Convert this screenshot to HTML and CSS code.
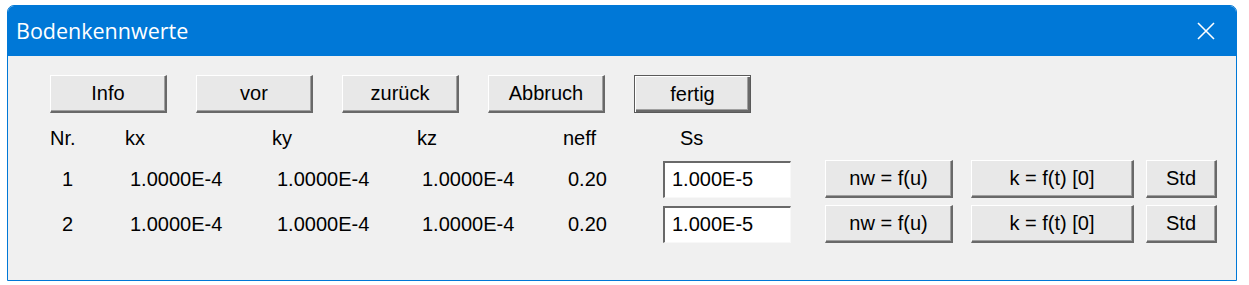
FILE: index.html
```html
<!DOCTYPE html>
<html lang="de">
<head>
<meta charset="utf-8">
<title>Bodenkennwerte</title>
<link rel="stylesheet" href="styles.css">
</head>
<body>
<div class="window">
  <div class="titlebar">
    <span class="title">Bodenkennwerte</span>
    <svg class="close" width="18" height="18" viewBox="0 0 18 18"><path d="M1 1 L17 17 M17 1 L1 17" stroke="#fff" stroke-width="1.6" fill="none"/></svg>
  </div>
  <div class="client">
    <div class="toolbar">
      <button class="btn tb">Info</button>
      <button class="btn tb">vor</button>
      <button class="btn tb">zurück</button>
      <button class="btn tb">Abbruch</button>
      <button class="btn tb default">fertig</button>
    </div>
    <div class="grid">
      <div class="hd c-nr">Nr.</div>
      <div class="hd c-kx">kx</div>
      <div class="hd c-ky">ky</div>
      <div class="hd c-kz">kz</div>
      <div class="hd c-ne">neff</div>
      <div class="hd c-ss">Ss</div>
      <div class="hd"></div>
      <div class="hd"></div>
      <div class="hd"></div>

      <div class="cell d-nr">1</div>
      <div class="cell d-k">1.0000E-4</div>
      <div class="cell d-k">1.0000E-4</div>
      <div class="cell d-k">1.0000E-4</div>
      <div class="cell d-k">0.20</div>
      <div class="cell"><div class="input">1.000E-5</div></div>
      <div class="cell"><button class="btn b1">nw = f(u)</button></div>
      <div class="cell"><button class="btn b2">k = f(t) [0]</button></div>
      <div class="cell"><button class="btn b3">Std</button></div>

      <div class="cell d-nr">2</div>
      <div class="cell d-k">1.0000E-4</div>
      <div class="cell d-k">1.0000E-4</div>
      <div class="cell d-k">1.0000E-4</div>
      <div class="cell d-k">0.20</div>
      <div class="cell"><div class="input">1.000E-5</div></div>
      <div class="cell"><button class="btn b1">nw = f(u)</button></div>
      <div class="cell"><button class="btn b2">k = f(t) [0]</button></div>
      <div class="cell"><button class="btn b3">Std</button></div>
    </div>
  </div>
</div>
</body>
</html>
```
FILE: styles.css
```css
html, body {
  margin: 0;
  padding: 0;
  background: #ffffff;
}
body {
  font-family: "Liberation Sans", Arial, sans-serif;
  color: #000;
}
.window {
  margin: 5px 0 0 7px;
  width: 1228px;
  height: 274px;
  border: 1px solid #0078d7;
  border-radius: 7px 7px 0 0;
  background: #f0f0f0;
  display: flex;
  flex-direction: column;
  overflow: hidden;
}
.titlebar {
  height: 50px;
  background: #0078d7;
  display: flex;
  align-items: center;
  justify-content: space-between;
  padding: 0 21px 0 8px;
  flex: none;
}
.title {
  font-family: "Open Sans", "Noto Sans", sans-serif;
  font-size: 21.5px;
  color: #fff;
  margin-top: -1px;
}
.close {
  display: block;
}
.client {
  flex: 1;
  background: #f0f0f0;
  padding: 19px 0 0 42px;
  font-size: 20px;
}
.toolbar {
  display: flex;
  gap: 29px;
}
.btn {
  font-family: "Liberation Sans", Arial, sans-serif;
  font-size: 20px;
  color: #000;
  background: #e8e8e8;
  border-style: solid;
  border-width: 1px 2px 2px 1px;
  border-color: #ffffff #696969 #696969 #ffffff;
  box-shadow: inset -1px -1px 0 #a0a0a0;
  padding: 0;
  margin: 0;
  height: 38px;
  display: flex;
  align-items: center;
  justify-content: center;
}
.tb {
  width: 117px;
}
.default {
  border: 1px solid #5a5a5a;
  box-shadow: inset 1px 1px 0 #ffffff, inset -2px -2px 0 #696969, inset -3px -3px 0 #a0a0a0;
}
.grid {
  display: grid;
  grid-template-columns: 75px 147px 145px 146px 100px 162px 146px 175px 71px;
  grid-template-rows: 30px 38px 38px;
  row-gap: 7px;
  margin-top: 9px;
}
.hd {
  display: flex;
  align-items: center;
  padding-top: 2px;
}
.c-ss {
  padding-left: 17px;
}
.cell {
  display: flex;
  align-items: center;
  padding-top: 2px;
}
.d-nr {
  padding-left: 12px;
}
.d-k {
  padding-left: 5px;
}
.input {
  background: #fff;
  border-style: solid;
  border-width: 2px 1px 1px 2px;
  border-color: #696969 #f8f8f8 #f8f8f8 #696969;
  display: flex;
  align-items: center;
  padding-left: 7px;
  box-sizing: border-box;
  width: 128px;
  height: 37px;
}
.b1 {
  width: 128px;
}
.b2 {
  width: 163px;
}
.b3 {
  width: 71px;
}
```
